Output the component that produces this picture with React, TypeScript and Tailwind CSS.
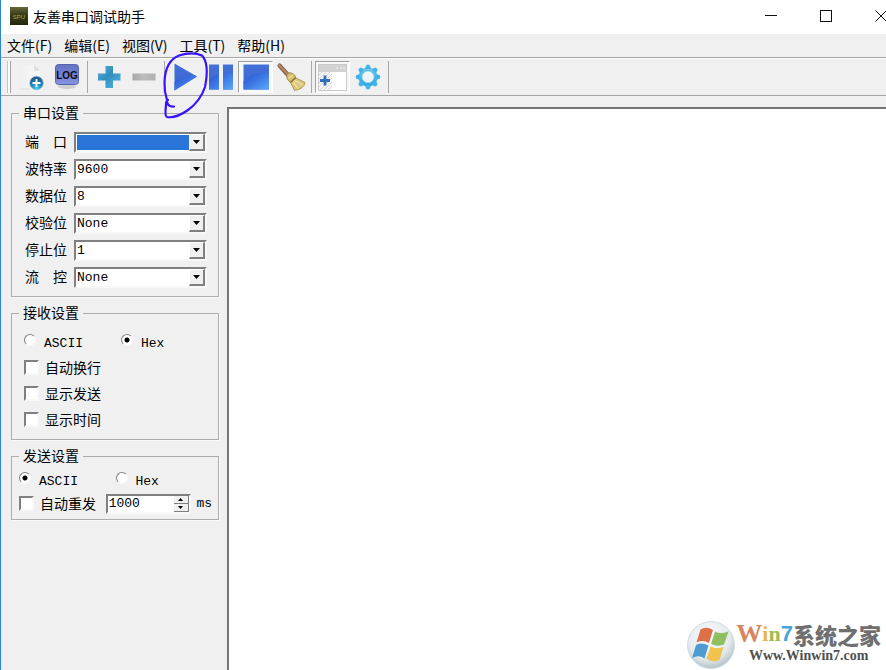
import React, { useId } from "react";

const cjk = "font-['Noto_Sans_CJK_SC',sans-serif]";
const mono = "font-['Liberation_Mono','Noto_Sans_CJK_SC',monospace]";

function DocIcon() {
  return (
    <svg width="28" height="28" viewBox="0 0 28 28" aria-hidden="true">
      <defs>
        <linearGradient id="doc" x1="0" y1="0" x2="1" y2="0">
          <stop offset="0" stopColor="#efefef" />
          <stop offset="1" stopColor="#f9f9f9" />
        </linearGradient>
        <radialGradient id="orb" cx="0.5" cy="0.9" r="0.8">
          <stop offset="0" stopColor="#3ed2f4" />
          <stop offset="0.55" stopColor="#1f80b8" />
          <stop offset="1" stopColor="#1b5a90" />
        </radialGradient>
      </defs>
      <path d="M2 2H17L22 8V26H2Z" fill="url(#doc)" />
      <path d="M16 1V8H22Z" fill="#e0e0e0" />
      <path d="M2 26H12" stroke="#e0e0e0" />
      <circle cx="18.500" cy="20" r="6.800" fill="url(#orb)" stroke="#9cc0d6" strokeWidth="0.800" />
      <path d="M18.500 16V24M14.500 20H22.500" stroke="#fff" strokeWidth="1.800" />
    </svg>
  );
}

function LogIcon() {
  return (
    <svg width="28" height="30" viewBox="0 0 28 30" aria-hidden="true">
      <defs>
        <linearGradient id="log" x1="0" y1="0" x2="0" y2="1">
          <stop offset="0" stopColor="#6673c4" />
          <stop offset="0.5" stopColor="#7180d0" />
          <stop offset="1" stopColor="#8795e2" />
        </linearGradient>
      </defs>
      <ellipse cx="14" cy="24.500" rx="9" ry="2.600" fill="#cfcfcf" />
      <rect x="2.500" y="2.500" width="23" height="20" rx="3" fill="url(#log)" stroke="#5663b0" />
      <text x="14" y="16.500" textAnchor="middle" fontFamily="Liberation Sans, sans-serif" fontSize="10" fontWeight="bold" fill="#0c0c18">LOG</text>
    </svg>
  );
}

function PlusIcon() {
  return (
    <svg width="24" height="24" viewBox="0 0 24 24" aria-hidden="true">
      <defs>
        <linearGradient id="plus" x1="0" y1="0" x2="1" y2="1">
          <stop offset="0" stopColor="#63aed0" />
          <stop offset="0.45" stopColor="#2f8fbe" />
          <stop offset="1" stopColor="#58b5e6" />
        </linearGradient>
      </defs>
      <path d="M8.500 1H16V8.500H23.500V15.500H16V23H8.500V15.500H1V8.500H8.500Z" fill="url(#plus)" />
    </svg>
  );
}

function MinusIcon() {
  return (
    <svg width="24" height="24" viewBox="0 0 24 24" aria-hidden="true">
      <defs>
        <linearGradient id="minus" x1="0" y1="0" x2="1" y2="0">
          <stop offset="0" stopColor="#a9a9a9" />
          <stop offset="0.5" stopColor="#bdbdbd" />
          <stop offset="1" stopColor="#b0b0b0" />
        </linearGradient>
      </defs>
      <rect x="0.500" y="8.500" width="23" height="7" fill="url(#minus)" />
    </svg>
  );
}

function BlueDefs({ id }: { id: string }) {
  return (
    <defs>
      <linearGradient id={id} x1="0" y1="0" x2="0" y2="1">
        <stop offset="0" stopColor="#4472d8" />
        <stop offset="1" stopColor="#3a63d2" />
      </linearGradient>
      <linearGradient id={id + "b"} x1="0" y1="0" x2="1" y2="1">
        <stop offset="0" stopColor="#2c52cc" />
        <stop offset="0.500" stopColor="#3d78e4" />
        <stop offset="1" stopColor="#5ea8fa" />
      </linearGradient>
    </defs>
  );
}

function PlayIcon() {
  return (
    <svg width="26" height="28" viewBox="0 0 26 28" aria-hidden="true">
      <BlueDefs id="play" />
      <path d="M1.500 0.500L24 13.500L1.500 27.500Z" fill="url(#play)" />
      <path d="M1.500 19C7 15 13 12.500 22.500 12.500L24 13.500L1.500 27.500Z" fill="url(#playb)" />
    </svg>
  );
}

function PauseIcon() {
  return (
    <svg width="26" height="26" viewBox="0 0 26 26" aria-hidden="true">
      <BlueDefs id="pause" />
      <path d="M1 0.500H11V25.500H1ZM15 0.500H25V25.500H15Z" fill="url(#pause)" />
      <path d="M1 16Q5 12 11 10.500V25.500H1ZM15 9.500Q20 8.500 25 9V25.500H15Z" fill="url(#pauseb)" />
    </svg>
  );
}

function StopIcon() {
  return (
    <svg width="26" height="26" viewBox="0 0 26 26" aria-hidden="true">
      <BlueDefs id="stop" />
      <rect x="0.500" y="0.500" width="25.500" height="25" fill="url(#stop)" />
      <path d="M0.500 17C7 10 16 8 26 9V25.500H0.500Z" fill="url(#stopb)" />
    </svg>
  );
}

function BroomIcon() {
  return (
    <svg width="30" height="30" viewBox="0 0 30 30" aria-hidden="true">
      <path d="M3.500 3.500L12 13" stroke="#8a5c44" strokeWidth="4.200" strokeLinecap="round" />
      <path d="M3 3L12 12.500" stroke="#b58a6c" strokeWidth="2" strokeLinecap="round" />
      <path d="M11 12Q15 9 19 13.500L20 17L15 21Q9.500 17 11 12Z" fill="#d8bc6c" stroke="#927a3c" strokeWidth="0.800" />
      <path d="M19 15.500L29 20.500Q28 27 18.500 28.500L14.500 20.500Z" fill="#dcc67c" stroke="#a58a45" strokeWidth="0.800" />
      <path d="M18 18L26.500 23M17 20L22.500 26.500M12.500 16.500L17 13" stroke="#f2e3a4" strokeWidth="1.200" />
      <path d="M14.500 20.500L19.500 16" stroke="#846d34" strokeWidth="1.300" />
    </svg>
  );
}

function PanelIcon() {
  return (
    <svg width="29" height="27" viewBox="0 0 29 27" aria-hidden="true">
      <defs>
        <pattern id="hatch" width="4" height="4" patternUnits="userSpaceOnUse">
          <rect width="4" height="4" fill="#f6f6f6" />
          <path d="M0 4L4 0" stroke="#cfcfcf" strokeWidth="0.900" />
        </pattern>
      </defs>
      <rect x="0.500" y="0.500" width="28" height="26" fill="#fff" stroke="#cbcbcb" />
      <rect x="1" y="1" width="27" height="7" fill="#d2d2d2" />
      <path d="M18 4H20M22 4H24M25 4H27" stroke="#f5f5f5" />
      <rect x="1" y="8" width="13" height="18" fill="url(#hatch)" />
      <path d="M7 11.500V21.500M2 16.500H12" stroke="#2f6fbd" strokeWidth="2.800" />
    </svg>
  );
}

function GearIcon() {
  return (
    <svg width="26" height="26" viewBox="0 0 26 26" aria-hidden="true">
      <defs>
        <linearGradient id="gear" x1="0" y1="0" x2="0" y2="1">
          <stop offset="0" stopColor="#72c8ea" />
          <stop offset="1" stopColor="#22a8e4" />
        </linearGradient>
      </defs>
      <circle cx="13" cy="13" r="9.500" fill="url(#gear)" />
      {[0, 45, 90, 135, 180, 225, 270, 315].map((a) => (
        <path key={a} d="M10 5L11.200 1.200Q13 0 14.800 1.200L16 5Z" fill="#42b4e6" transform={`rotate(${a} 13 13)`} />
      ))}
      <circle cx="13" cy="13" r="5.800" fill="#eef4f8" stroke="#a3dcf2" />
    </svg>
  );
}

function Tool({ label, pressed, children }: { label: string; pressed?: boolean; children: React.ReactNode }) {
  return (
    <button
      type="button"
      aria-label={label}
      className={
        "flex h-8 w-[35px] shrink-0 items-center justify-center border " +
        (pressed ? "border-t-[#a0a0a0] border-r-white border-b-white border-l-[#a0a0a0] bg-[#f8f8f8]" : "border-transparent")
      }
    >
      {children}
    </button>
  );
}

function Separator() {
  return (
    <div className="flex w-[7px] shrink-0 justify-center">
      <div className="h-8 w-px bg-[#a8a8a8]" />
    </div>
  );
}

function Group({ title, children }: { title: string; children: React.ReactNode }) {
  return (
    <fieldset className="min-w-0 border border-[#adadad] shadow-[1px_1px_0_#fafafa]">
      <legend className={`ml-[7px] px-1 pb-[2px] text-sm leading-[18px] ${cjk}`}>{title}</legend>
      {children}
    </fieldset>
  );
}

const sunken = "border-2 border-t-[#808080] border-l-[#808080] border-r-[#f8f8f8] border-b-[#f8f8f8] bg-white";

function Combo({ label, options, highlighted }: { label: string; options: string[]; highlighted?: boolean }) {
  const id = useId();
  return (
    <div className="flex items-start gap-[7px]">
      <label htmlFor={id} className={`w-[42px] shrink-0 text-sm leading-[18px] whitespace-pre ${cjk}`}>{label}</label>
      <div className={`relative flex h-[21px] flex-1 ${sunken}`}>
        <select
          id={id}
          className={`w-full min-w-0 appearance-none pr-4 pl-px text-[13px] leading-4 outline-none ${mono} ${
            highlighted ? "border border-r-[16px] border-white bg-[#2874d7]" : "bg-white"
          }`}
        >
          {options.map((o) => (
            <option key={o}>{o}</option>
          ))}
        </select>
        <span className="pointer-events-none absolute inset-y-0 right-0 flex w-4 items-center justify-center border-t border-r-2 border-b-2 border-l border-t-white border-r-[#808080] border-b-[#808080] border-l-white bg-[#f0f0f0]">
          <svg width="7" height="4" viewBox="0 0 7 4" aria-hidden="true">
            <path d="M0 0H7L3.500 4Z" fill="#000" />
          </svg>
        </span>
      </div>
    </div>
  );
}

function Radio({ name, label, checked }: { name: string; label: string; checked?: boolean }) {
  return (
    <label className="flex h-[18px] w-[97px] items-start gap-2">
      <input
        type="radio"
        name={name}
        defaultChecked={checked}
        className="m-0 size-3 shrink-0 appearance-none rounded-full border border-t-[#808080] border-r-[#f6f6f6] border-b-[#f6f6f6] border-l-[#808080] bg-white checked:bg-[radial-gradient(circle,#000_0_2px,#fff_3px)]"
      />
      <span className={`pt-[2px] text-[13px] leading-4 ${mono}`}>{label}</span>
    </label>
  );
}

function Check({ label }: { label: string }) {
  return (
    <label className="flex h-5 items-start gap-[6px]">
      <input type="checkbox" className={`mt-[2px] size-[15px] shrink-0 appearance-none ${sunken}`} />
      <span className={`text-sm leading-[18px] ${cjk}`}>{label}</span>
    </label>
  );
}

function Watermark() {
  return (
    <div className="absolute right-[5px] bottom-0 flex items-start">
      <svg width="50" height="50" viewBox="0 0 50 50" aria-hidden="true">
        <defs>
          <radialGradient id="wm" cx="0.450" cy="0.350" r="0.650">
            <stop offset="0" stopColor="#fff" />
            <stop offset="0.700" stopColor="#e3eaed" />
            <stop offset="1" stopColor="#b5c2ca" />
          </radialGradient>
        </defs>
        <circle cx="25" cy="25" r="23.500" fill="url(#wm)" stroke="#ccd5da" strokeWidth="0.800" />
        <path d="M14.500 9.500Q20 6 27 10L23 23Q17 19.500 10.500 22.500Z" fill="#dd6f49" />
        <path d="M29 11.500Q34 14.500 42.500 11.500L38 24.500Q31 27 25 24Z" fill="#90bf62" />
        <path d="M10 25Q16 22 22.500 25.500L18.500 38.500Q13 34.500 6 38Z" fill="#4d9bd2" />
        <path d="M24.500 26.500Q31 29.500 37.500 27L33.500 40Q27 43 20.500 39Z" fill="#f0c24e" />
      </svg>
      <div className="flex flex-col items-center">
        <div className="flex h-7 items-center font-black text-[#6f6f6f]">
          <span className="font-['Liberation_Serif',serif] text-[26px] leading-7 text-[#d98560]">W</span>
          <span className="font-['Liberation_Serif',serif] text-[22px] leading-7 text-[#e8b44e]">i</span>
          <span className="font-['Liberation_Serif',serif] text-[22px] leading-7 text-[#a3bb50]">n</span>
          <span className="font-['Liberation_Sans',sans-serif] text-[22px] leading-7 text-[#46a5dc]">7</span>
          <span className={`text-[22px] leading-7 ${cjk}`}>系统之家</span>
        </div>
        <div className="font-['Liberation_Serif',serif] text-sm leading-4 font-bold text-[#505050]">Www.Winwin7.com</div>
      </div>
    </div>
  );
}

export default function App() {
  return (
    <div className={`relative flex min-h-screen flex-col overflow-hidden border-l border-[#2f83d6] bg-[#f0f0f0] text-black ${cjk}`}>
      <header className="flex h-[34px] items-center bg-white pb-[2px] pl-[9px]">
        <svg width="18" height="18" viewBox="0 0 18 18" aria-hidden="true">
          <defs>
            <linearGradient id="app" x1="0" y1="0" x2="0" y2="1">
              <stop offset="0" stopColor="#66683a" />
              <stop offset="0.400" stopColor="#3c3f1c" />
              <stop offset="1" stopColor="#24270d" />
            </linearGradient>
          </defs>
          <rect width="18" height="18" fill="url(#app)" />
          <text x="9" y="11.500" textAnchor="middle" fontFamily="Liberation Sans, sans-serif" fontSize="6" fill="#a3aa55">SPU</text>
        </svg>
        <h1 className="ml-[5px] flex-1 text-sm leading-5">友善串口调试助手</h1>
        <div className="-mr-[22px] flex">
          <button type="button" aria-label="最小化" className="flex h-8 w-[55px] items-center justify-center">
            <svg width="12" height="12" viewBox="0 0 12 12"><path d="M0 5.500H12" stroke="#111" /></svg>
          </button>
          <button type="button" aria-label="最大化" className="flex h-8 w-[55px] items-center justify-center">
            <svg width="12" height="12" viewBox="0 0 12 12"><rect x="0.500" y="0.500" width="11" height="11" fill="none" stroke="#111" /></svg>
          </button>
          <button type="button" aria-label="关闭" className="flex h-8 w-[55px] items-center justify-center">
            <svg width="12" height="12" viewBox="0 0 12 12"><path d="M0.500 0.500L11.500 11.500M11.500 0.500L0.500 11.500" stroke="#111" /></svg>
          </button>
        </div>
      </header>

      <nav className="flex h-6 items-center gap-3 border-b border-[#a5a5a5] pb-[2px] pl-[6px] text-sm leading-5">
        {["文件(F)", "编辑(E)", "视图(V)", "工具(T)", "帮助(H)"].map((m) => (
          <button type="button" key={m}>{m}</button>
        ))}
      </nav>

      <div className="flex h-[38px] items-center border-t border-b border-t-white border-b-[#a5a5a5] pl-[6px]">
        <div className="mr-[3px] h-8 w-1 border-r border-l border-r-[#a5a5a5] border-l-[#c4c4c4] bg-white" />
        <Tool label="新建"><DocIcon /></Tool>
        <Tool label="日志"><LogIcon /></Tool>
        <Separator />
        <Tool label="放大"><PlusIcon /></Tool>
        <Tool label="缩小"><MinusIcon /></Tool>
        <Separator />
        <Tool label="开始"><PlayIcon /></Tool>
        <Tool label="暂停"><PauseIcon /></Tool>
        <Tool label="停止" pressed><StopIcon /></Tool>
        <Tool label="清除"><BroomIcon /></Tool>
        <Separator />
        <Tool label="面板" pressed><PanelIcon /></Tool>
        <Tool label="设置"><GearIcon /></Tool>
        <Separator />
      </div>

      <main className="flex flex-1">
        <aside className="flex w-[226px] shrink-0 flex-col gap-[6px] pt-[7px] pr-2 pl-[10px]">
          <Group title="串口设置">
            <div className="flex flex-col gap-[6px] pt-[9px] pr-[11px] pb-2 pl-[13px]">
              <Combo label="端　口" options={[""]} highlighted />
              <Combo label="波特率" options={["9600", "19200", "115200"]} />
              <Combo label="数据位" options={["8", "7", "6", "5"]} />
              <Combo label="校验位" options={["None", "Odd", "Even"]} />
              <Combo label="停止位" options={["1", "2"]} />
              <Combo label="流　控" options={["None"]} />
            </div>
          </Group>
          <Group title="接收设置">
            <div className="flex flex-col gap-[6px] pt-[11px] pb-[9px] pl-3">
              <div className="flex">
                <Radio name="receive" label="ASCII" />
                <Radio name="receive" label="Hex" checked />
              </div>
              <Check label="自动换行" />
              <Check label="显示发送" />
              <Check label="显示时间" />
            </div>
          </Group>
          <Group title="发送设置">
            <div className="flex flex-col gap-1 pt-[6px] pr-[6px] pb-[5px] pl-[7px]">
              <div className="flex">
                <Radio name="send" label="ASCII" checked />
                <Radio name="send" label="Hex" />
              </div>
              <div className="flex items-center justify-between">
                <Check label="自动重发" />
                <div className={`ml-1 flex h-5 w-[85px] ${sunken}`}>
                  <input
                    type="text"
                    inputMode="numeric"
                    aria-label="重发间隔"
                    defaultValue="1000"
                    className={`w-full min-w-0 pl-px text-[13px] leading-4 outline-none ${mono}`}
                  />
                  <div className="flex w-[15px] shrink-0 flex-col">
                    <button type="button" aria-label="增加" className="flex h-2 items-center justify-center border-r border-b border-[#808080] bg-[#f0f0f0]">
                      <svg width="5" height="3" viewBox="0 0 5 3"><path d="M0 3L2.500 0L5 3Z" /></svg>
                    </button>
                    <button type="button" aria-label="减少" className="flex h-2 items-center justify-center border-r border-b border-[#808080] bg-[#f0f0f0]">
                      <svg width="5" height="3" viewBox="0 0 5 3"><path d="M0 0L2.500 3L5 0Z" /></svg>
                    </button>
                  </div>
                </div>
                <span className={`text-[13px] leading-4 ${mono}`}>ms</span>
              </div>
            </div>
          </Group>
        </aside>
        <section className="flex flex-1 pt-[11px]">
          <textarea
            aria-label="接收数据"
            className={`block w-full flex-1 resize-none border-t-2 border-l-2 border-[#757575] bg-white outline-none ${mono}`}
          />
        </section>
      </main>

      <svg className="pointer-events-none absolute top-[50px] left-[160px]" width="52" height="72" viewBox="0 0 52 72" aria-hidden="true">
        <path
          d="M6 50Q3 41 3.500 32C4 19 9 9 18 5.500C26 3 35 3 41 5.500C48 13 46 27 44 37C41 46 34 55 27 60C20 65 12 68 6 67C3 66 5 59 5 54Q5 51 7 50M6 52Q7 57 13 56.500"
          fill="none"
          stroke="#3812ff"
          strokeWidth="2.200"
          strokeLinecap="round"
        />
      </svg>
      <Watermark />
    </div>
  );
}
